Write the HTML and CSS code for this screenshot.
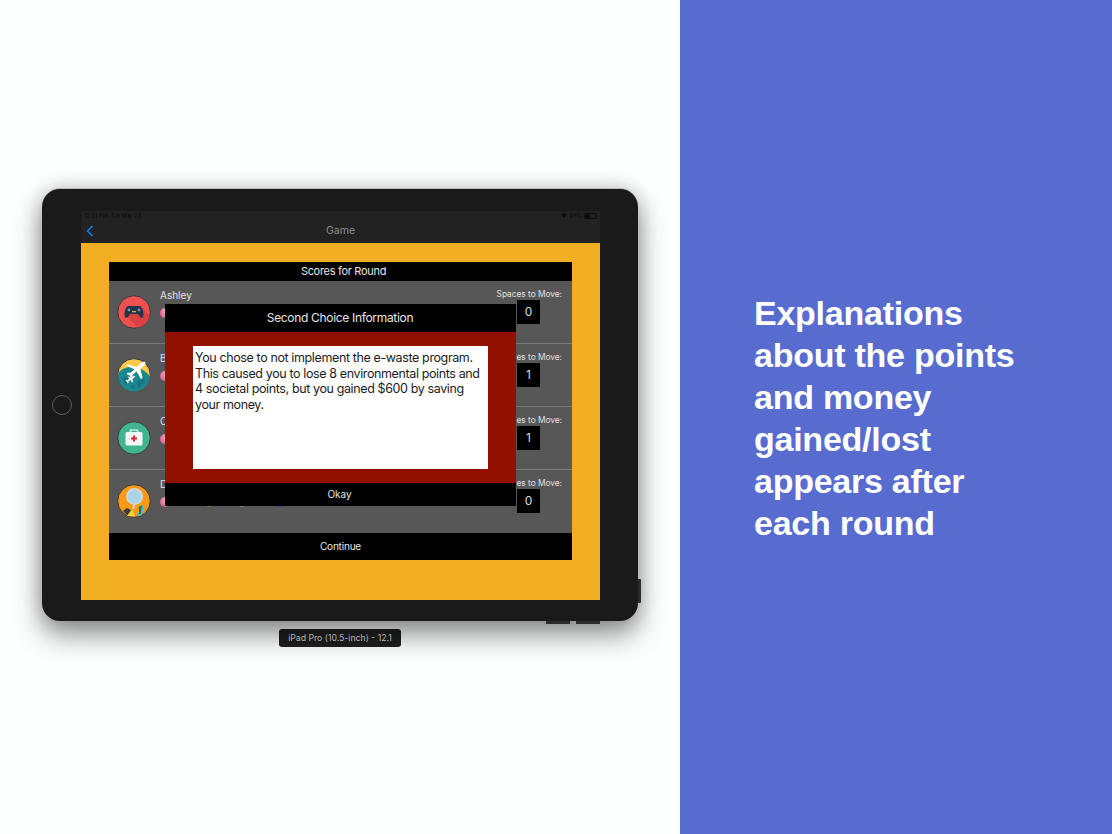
FILE: index.html
```html
<!DOCTYPE html>
<html lang="en">
<head>
    <meta charset="UTF-8">
    <meta name="viewport" content="width=device-width, initial-scale=1.0">
    <title>Game round explanation</title>
    <link rel="stylesheet" href="styles.css">
</head>
<body>
    <div class="left">
        <div class="device">
            <div class="home-button"></div>
            <div class="side-button"></div>
            <div class="bottom-button first"></div>
            <div class="bottom-button second"></div>
            <div class="screen">
                <div class="topbar">
                    <div class="status">
                        <span>12:51 PM &nbsp;Sat Mar 23</span>
                        <span class="status-right">
                            <svg class="wifi" viewBox="0 0 10 8"><path d="M0 2.5 C3 -0.5 7 -0.5 10 2.5 L5 8 Z" fill="#0c0c0c"/></svg>
                            49%
                            <span class="battery"><span class="battery-level"></span></span>
                        </span>
                    </div>
                    <div class="nav">
                        <svg class="back" viewBox="0 0 8 12"><path d="M6.5 1 L1.5 6 L6.5 11" fill="none" stroke="#0a7aff" stroke-width="1.6"/></svg>
                        <span>Game</span>
                    </div>
                </div>
                <div class="game">
                    <div class="scores">
                        <div class="scores-title">Scores for Round</div>
                        <div class="row">
                            <svg class="avatar" viewBox="0 0 34 34">
                                <circle cx="17" cy="17" r="16.3" fill="#ef5050" stroke="#3a3a3a" stroke-width="1"/>
                                <path d="M9 21 L21 32.700 A16 16 0 0 0 32.700 20 L26 13 Z" fill="#dc4040"/>
                                <path d="M11.500 11 H22.500 C25 11 26.500 16 26.500 20 C26.500 23.500 24 23.500 22.500 21 L21 19 H13 L11.500 21 C10 23.500 7.500 23.500 7.500 20 C7.500 16 9 11 11.500 11 Z" fill="#20344c"/>
                                <circle cx="12" cy="15" r="1.400" fill="#7f93a8"/>
                                <circle cx="22" cy="15" r="1.400" fill="#7f93a8"/>
                                <rect x="15" y="16" width="4" height="1.300" fill="#f2ae22"/>
                            </svg>
                            <div class="player">
                                <div class="name">Ashley</div>
                                <div class="stats"><i class="gem"></i><i class="dot green"></i><i class="dot grey"></i><i class="dot blue"></i></div>
                            </div>
                            <div class="move">
                                <div class="move-label">Spaces to Move:</div>
                                <div class="move-box">0</div>
                            </div>
                        </div>
                        <div class="row">
                            <svg class="avatar" viewBox="0 0 34 34">
                                <circle cx="17" cy="17" r="16.3" fill="#fbc94a" stroke="#3a3a3a" stroke-width="1"/>
                                <path d="M1 16 C3 12 8 9 14 9 C22 9 30 13 33 19 A16 16 0 0 1 1 16 Z" fill="#1b8791"/>
                                <path d="M5 21 L10 18 L12 24 L9 27 Z M20 23 L27 20 L28 25 L21 30 Z M13 29 L17 27 L18 31 Z" fill="#17747e"/>
                                <path d="M28 4 C29 4.500 28.500 6 27.500 7 L23.500 11 L25.500 20 L24 21 L19.500 13.500 L15.500 17 L15.500 20 L14 21 L12.800 17.500 L9.500 16 L10.500 14.800 L13.500 14.800 L17.500 11.500 L9.500 7.500 L10.500 6.300 L19.500 9 L24 5 C25.500 3.800 27 3.500 28 4 Z" fill="#fff"/>
                                <path d="M18 19 L15.500 21 L16 24 L15 24.500 L13.500 22 L11.500 23.500 L11.500 25 L10.500 25.500 L10 23.500 L8.500 22.800 L9 22 L10.500 22 L12.500 20.500 L10.500 19 L11 18.500 L14 19.500 L16.500 18 C17.500 17.500 18.500 18.500 18 19 Z" fill="#fff"/>
                            </svg>
                            <div class="player">
                                <div class="name">B</div>
                                <div class="stats"><i class="gem"></i><i class="dot green"></i><i class="dot grey"></i><i class="dot blue"></i></div>
                            </div>
                            <div class="move">
                                <div class="move-label">Spaces to Move:</div>
                                <div class="move-box">1</div>
                            </div>
                        </div>
                        <div class="row">
                            <svg class="avatar" viewBox="0 0 34 34">
                                <circle cx="17" cy="17" r="16.3" fill="#40b58f" stroke="#3a3a3a" stroke-width="1"/>
                                <path d="M13.500 11 V9 H20.500 V11" fill="none" stroke="#fff" stroke-width="1.200"/>
                                <rect x="8.500" y="11" width="17" height="13.500" rx="1.500" fill="#f4f7f6"/>
                                <path d="M16 14.500 H18 V16.500 H20 V18.500 H18 V20.500 H16 V18.500 H14 V16.500 H16 Z" fill="#e5232f"/>
                            </svg>
                            <div class="player">
                                <div class="name">C</div>
                                <div class="stats"><i class="gem"></i><i class="dot green"></i><i class="dot grey"></i><i class="dot blue"></i></div>
                            </div>
                            <div class="move">
                                <div class="move-label">Spaces to Move:</div>
                                <div class="move-box">1</div>
                            </div>
                        </div>
                        <div class="row">
                            <svg class="avatar" viewBox="0 0 34 34">
                                <circle cx="17" cy="17" r="16.3" fill="#f99a16" stroke="#3a3a3a" stroke-width="1"/>
                                <path d="M6 27 L10 24 L14 26 L15 31 L10 31 Z" fill="#3a3a3a"/>
                                <path d="M10 32 L15 25 L18 32.500 Z" fill="#f5d33f"/>
                                <path d="M20 32.500 L25 21 L27.500 22.500 L25 31 Z" fill="#3fc3dc"/>
                                <path d="M22 30 L22 23 L25 21 L23.500 30 Z" fill="#2a6a4a"/>
                                <circle cx="17.500" cy="12.500" r="7.500" fill="#a9d3e6" stroke="#cfd8dc" stroke-width="2"/>
                                <path d="M17 21 L16.500 25" stroke="#cfd8dc" stroke-width="2"/>
                            </svg>
                            <div class="player">
                                <div class="name">D</div>
                                <div class="stats"><i class="gem"></i><i class="dot green"></i><i class="dot grey"></i><i class="dot blue"></i></div>
                            </div>
                            <div class="move">
                                <div class="move-label">Spaces to Move:</div>
                                <div class="move-box">0</div>
                            </div>
                        </div>
                        <div class="continue">Continue</div>
                    </div>
                    <div class="modal">
                        <div class="modal-title">Second Choice Information</div>
                        <div class="modal-body">
                            <div class="modal-text">You chose to not implement the e-waste program. This caused you to lose 8 environmental points and 4 societal points, but you gained $600 by saving your money.</div>
                        </div>
                        <div class="modal-okay">Okay</div>
                    </div>
                </div>
            </div>
        </div>
        <div class="device-label">iPad Pro (10.5-inch) - 12.1</div>
    </div>
    <div class="right">
        <h1>Explanations about the points and money gained/lost appears after each round</h1>
    </div>
</body>
</html>
```

FILE: styles.css
```css
body {
    margin: 0;
    height: 834px;
    display: flex;
    overflow: hidden;
    font-family: Inter, "Liberation Sans", sans-serif;
}
.left {
    width: 680px;
    padding-top: 189px;
    box-sizing: border-box;
    display: flex;
    flex-direction: column;
    align-items: center;
    background: #fdfffe;
}
.right {
    flex: 1;
    display: flex;
    align-items: center;
    padding: 2px 0 0 74px;
    background: #586cd0;
}
h1 {
    margin: 0;
    width: 290px;
    color: #fff;
    font-family: "Liberation Sans", Arial, sans-serif;
    font-size: 34px;
    line-height: 42px;
    font-weight: 700;
    letter-spacing: -0.25px;
}
.device {
    position: relative;
    width: 596px;
    height: 432px;
    box-sizing: border-box;
    padding: 22px 38px 21px 39px;
    border-radius: 18px;
    background: #1a1a1a;
    box-shadow: 0 -1px 0 #b8b8b8, 0 14px 28px rgba(0, 0, 0, 0.42), 0 0 20px rgba(0, 0, 0, 0.2);
}
.home-button {
    position: absolute;
    left: 10px;
    top: 206px;
    width: 18px;
    height: 18px;
    border: 1px solid #5c5c5c;
    border-radius: 50%;
}
.side-button {
    position: absolute;
    right: -3px;
    top: 390px;
    width: 3px;
    height: 24px;
    background: #2a2a2a;
    border-radius: 0 1px 1px 0;
}
.bottom-button {
    position: absolute;
    bottom: -3px;
    width: 24px;
    height: 3px;
    background: #2a2a2a;
}
.bottom-button.first {
    left: 504px;
}
.bottom-button.second {
    left: 534px;
}
.device-label {
    margin-top: 8px;
    width: 122px;
    height: 18px;
    line-height: 18px;
    text-align: center;
    border-radius: 3px;
    background: #1f1f1f;
    color: #dcdcdc;
    font-size: 8.700px;
}
.screen {
    height: 389px;
    display: flex;
    flex-direction: column;
}
.topbar {
    height: 32px;
    background: #222;
}
.status {
    height: 9px;
    padding: 0 3px;
    display: flex;
    justify-content: space-between;
    align-items: center;
    color: #0c0c0c;
    font-size: 5.800px;
}
.status-right {
    display: flex;
    align-items: center;
    gap: 2px;
}
.wifi {
    width: 6px;
    height: 5px;
}
.battery {
    width: 11px;
    height: 4px;
    border: 0.5px solid #0c0c0c;
    border-radius: 1.500px;
}
.battery-level {
    display: block;
    width: 5px;
    height: 4px;
    background: #0c0c0c;
}
.nav {
    position: relative;
    height: 21px;
    padding-bottom: 2px;
    display: flex;
    align-items: center;
    justify-content: center;
    color: #8c8c8c;
    font-size: 10.500px;
}
.back {
    position: absolute;
    left: 5px;
    top: 5px;
    width: 8px;
    height: 12px;
}
.game {
    position: relative;
    flex: 1;
    padding: 19px 28px 40px;
    background: #f2ae22;
}
.scores {
    height: 298px;
    display: flex;
    flex-direction: column;
    background: #575757;
}
.scores-title {
    height: 19px;
    padding-left: 6px;
    line-height: 19px;
    text-align: center;
    background: #000;
    color: #e6e6e6;
    font-size: 11px;
    letter-spacing: -0.3px;
}
.row {
    height: 63px;
    box-sizing: border-box;
    padding: 14px 10px 0 8px;
    display: flex;
    border-bottom: 1px solid #7a7a7a;
}
.row:nth-child(5) {
    border-bottom: 0;
}
.avatar {
    width: 34px;
    height: 34px;
    margin-right: 9px;
    flex-shrink: 0;
}
.player {
    flex: 1;
    margin-top: -6px;
}
.name {
    height: 12px;
    line-height: 12px;
    color: #e0e0e0;
    font-size: 10px;
}
.stats {
    margin-top: 6px;
    display: flex;
    align-items: center;
}
.gem {
    width: 10px;
    height: 10px;
    border-radius: 50%;
    background: radial-gradient(circle at 60% 35%, #f6b3cd, #e56b9b 60%);
}
.dot {
    width: 8px;
    height: 11px;
    border-radius: 50%;
}
.green {
    margin-left: 35px;
    background: #5a9a2f;
}
.grey {
    margin-left: 25px;
    background: #8c8c8c;
}
.blue {
    margin-left: 30px;
    background: #2d3fa8;
}
.move {
    margin-top: -7px;
    display: flex;
    flex-direction: column;
    align-items: flex-end;
}
.move-label {
    height: 12px;
    line-height: 12px;
    color: #e0e0e0;
    font-size: 8.300px;
}
.move-box {
    width: 23px;
    height: 24px;
    margin: 0 22px 0 0;
    line-height: 24px;
    text-align: center;
    background: #000;
    color: #dcdcdc;
    font-size: 12px;
}
.continue {
    height: 27px;
    line-height: 27px;
    text-align: center;
    background: #000;
    color: #e6e6e6;
    font-size: 10px;
    letter-spacing: -0.2px;
}
.modal {
    position: absolute;
    left: 84px;
    top: 61px;
    width: 351px;
    height: 202px;
    display: flex;
    flex-direction: column;
}
.modal-title {
    height: 28px;
    padding-right: 1px;
    line-height: 28px;
    text-align: center;
    background: #000;
    color: #e6e6e6;
    font-size: 12px;
    letter-spacing: -0.32px;
}
.modal-body {
    flex: 1;
    padding: 14px 28px;
    background: #921000;
}
.modal-text {
    height: 123px;
    box-sizing: border-box;
    padding: 4px 2px;
    background: #fff;
    color: #1c1c1c;
    font-size: 12.500px;
    line-height: 15.500px;
    letter-spacing: -0.38px;
}
.modal-okay {
    height: 23px;
    padding-right: 2px;
    line-height: 23px;
    text-align: center;
    background: #000;
    color: #e6e6e6;
    font-size: 10px;
}
```
